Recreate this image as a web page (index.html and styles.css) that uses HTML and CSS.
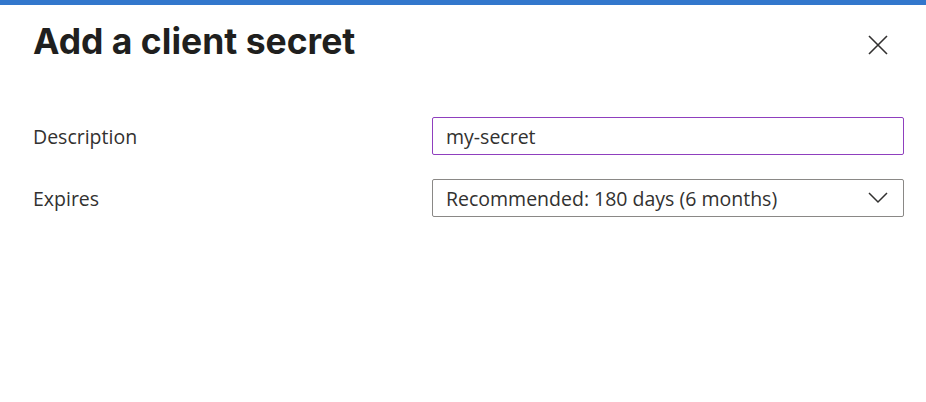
FILE: index.html
```html
<!DOCTYPE html>
<html>
<head>
<meta charset="utf-8">
<link rel="stylesheet" href="styles.css">
</head>
<body>
<div class="topbar"></div>
<div class="panel">
  <div class="header">
    <h1 class="title">Add a client secret</h1>
    <button class="close" aria-label="Close">
      <svg width="20" height="20" viewBox="0 0 20 20"><path d="M1 1 L19 19 M19 1 L1 19" stroke="#323130" stroke-width="1.6" fill="none"/></svg>
    </button>
  </div>
  <div class="form">
    <div class="row">
      <label class="label">Description</label>
      <div class="field focused">my-secret</div>
    </div>
    <div class="row">
      <label class="label">Expires</label>
      <div class="field select">
        <span>Recommended: 180 days (6 months)</span>
        <svg class="chev" width="20" height="12" viewBox="0 0 20 12"><path d="M1 1 L10 10 L19 1" stroke="#323130" stroke-width="1.5" fill="none"/></svg>
      </div>
    </div>
  </div>
</div>
</body>
</html>
```
FILE: styles.css
```css
* { box-sizing: border-box; }
body { margin: 0; background: #fff; width: 926px; height: 402px; overflow: hidden; }
.topbar { height: 5px; background: #3277cc; }
.panel { padding: 0 22px 0 33px; }
.header { display: flex; justify-content: space-between; align-items: flex-start; height: 112px; }
.title { margin: 0; padding-top: 17px; font-family: Inter, "Liberation Sans", sans-serif; font-weight: 700; font-size: 35.5px; color: #201f1e; letter-spacing: 0; line-height: 40px; }
.close { border: 0; background: none; padding: 0; margin-top: 30px; margin-right: 16px; width: 20px; height: 20px; cursor: pointer; }
.close svg { display: block; }
.form { display: flex; flex-direction: column; gap: 24px; }
.row { display: flex; align-items: center; justify-content: space-between; }
.label { font-family: "Open Sans", "Noto Sans", sans-serif; font-size: 19.5px; color: #323130; }
.field { width: 472px; height: 38px; border: 1px solid #8a8886; border-radius: 2px; padding: 0 13px; display: flex; align-items: center; font-family: "Open Sans", "Noto Sans", sans-serif; font-size: 19.5px; color: #323130; }
.field.focused { border-color: #8f3fbe; }
.select { justify-content: space-between; padding-right: 15px; }
.chev { display: block; }
```
